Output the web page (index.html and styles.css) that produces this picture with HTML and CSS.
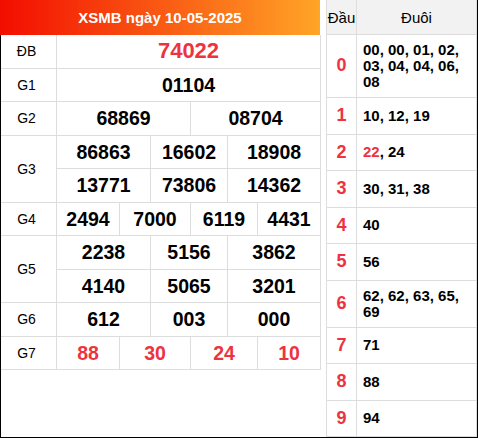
FILE: index.html
```
<!DOCTYPE html>
<html lang="vi">
<head>
<meta charset="utf-8">
<title>XSMB ngày 10-05-2025</title>
<link rel="stylesheet" href="styles.css">
</head>
<body>
<div class="page">
  <div class="left">
    <div class="title">XSMB ngày 10-05-2025</div>
    <div class="row r1"><div class="lbl">ĐB</div><div class="num db">74022</div></div>
    <div class="row r1"><div class="lbl">G1</div><div class="num">01104</div></div>
    <div class="row r2"><div class="lbl">G2</div><div class="num">68869</div><div class="num">08704</div></div>
    <div class="row r3">
      <div class="lbl span2">G3</div>
      <div class="num">86863</div><div class="num">16602</div><div class="num">18908</div>
      <div class="num">13771</div><div class="num">73806</div><div class="num">14362</div>
    </div>
    <div class="row r4"><div class="lbl">G4</div><div class="num">2494</div><div class="num">7000</div><div class="num">6119</div><div class="num">4431</div></div>
    <div class="row r3">
      <div class="lbl span2">G5</div>
      <div class="num">2238</div><div class="num">5156</div><div class="num">3862</div>
      <div class="num">4140</div><div class="num">5065</div><div class="num">3201</div>
    </div>
    <div class="row r3"><div class="lbl">G6</div><div class="num">612</div><div class="num">003</div><div class="num">000</div></div>
    <div class="row r4"><div class="lbl">G7</div><div class="num red">88</div><div class="num red">30</div><div class="num red">24</div><div class="num red">10</div></div>
  </div>
  <div class="right">
    <div class="hd">Đầu</div><div class="hd">Đuôi</div>
    <div class="dau">0</div><div class="duoi">00, 00, 01, 02, 03, 04, 04, 06, 08</div>
    <div class="dau">1</div><div class="duoi">10, 12, 19</div>
    <div class="dau">2</div><div class="duoi"><span><span class="red">22</span>, 24</span></div>
    <div class="dau">3</div><div class="duoi">30, 31, 38</div>
    <div class="dau">4</div><div class="duoi">40</div>
    <div class="dau">5</div><div class="duoi">56</div>
    <div class="dau">6</div><div class="duoi">62, 62, 63, 65, 69</div>
    <div class="dau">7</div><div class="duoi">71</div>
    <div class="dau">8</div><div class="duoi">88</div>
    <div class="dau">9</div><div class="duoi">94</div>
  </div>
</div>
</body>
</html>
```
FILE: styles.css
```
html, body {
  margin: 0;
  padding: 0;
  background: #fff;
}
body {
  font-family: "Liberation Sans", Arial, sans-serif;
  color: #000;
}
.page {
  box-sizing: border-box;
  width: 478px;
  height: 438px;
  border: 1px solid #000;
  border-top: 0;
  display: flex;
  align-items: flex-start;
  gap: 5px;
}
.left {
  width: 320px;
  flex: none;
}
.title {
  width: 320px;
  height: 35px;
  margin-left: -1px;
  background: linear-gradient(to right, #f30d00, #ffa527);
  color: #fff;
  font-weight: bold;
  font-size: 15px;
  display: flex;
  align-items: center;
  justify-content: center;
}
.row {
  display: grid;
}
.row > div {
  box-sizing: border-box;
  border-right: 1px solid #ddd;
  border-bottom: 1px solid #ddd;
  display: flex;
  align-items: center;
  justify-content: center;
}
.r1 { grid-template-columns: 56px 264px; }
.r2 { grid-template-columns: 56px 134px 130px; }
.r3 { grid-template-columns: 56px 94px 77px 93px; }
.r4 { grid-template-columns: 56px 63px 71px 67px 63px; }
.span2 { grid-row: span 2; }
.lbl {
  font-size: 14px;
  padding-right: 4px;
}
.num {
  font-size: 19.5px;
  font-weight: bold;
  line-height: 22.5px;
  padding: 5px 0;
}
.num.db {
  font-size: 22px;
  color: #ee3340;
}
.red {
  color: #ee3340;
}
.right {
  width: 151px;
  flex: none;
  box-sizing: border-box;
  border-left: 1px solid #ddd;
  display: grid;
  grid-template-columns: 30px 120px;
}
.right > div {
  box-sizing: border-box;
  border-right: 1px solid #ddd;
  border-bottom: 1px solid #ddd;
}
.hd {
  height: 35px;
  background: #f2f2f2;
  font-size: 15px;
  display: flex;
  align-items: center;
  justify-content: center;
}
.dau {
  color: #ee3340;
  font-size: 18px;
  font-weight: bold;
  line-height: 21.5px;
  padding: 7px 0;
  display: flex;
  align-items: center;
  justify-content: center;
}
.duoi {
  font-size: 15px;
  font-weight: bold;
  line-height: 16px;
  padding: 7px 6px;
  display: flex;
  align-items: center;
}
```
